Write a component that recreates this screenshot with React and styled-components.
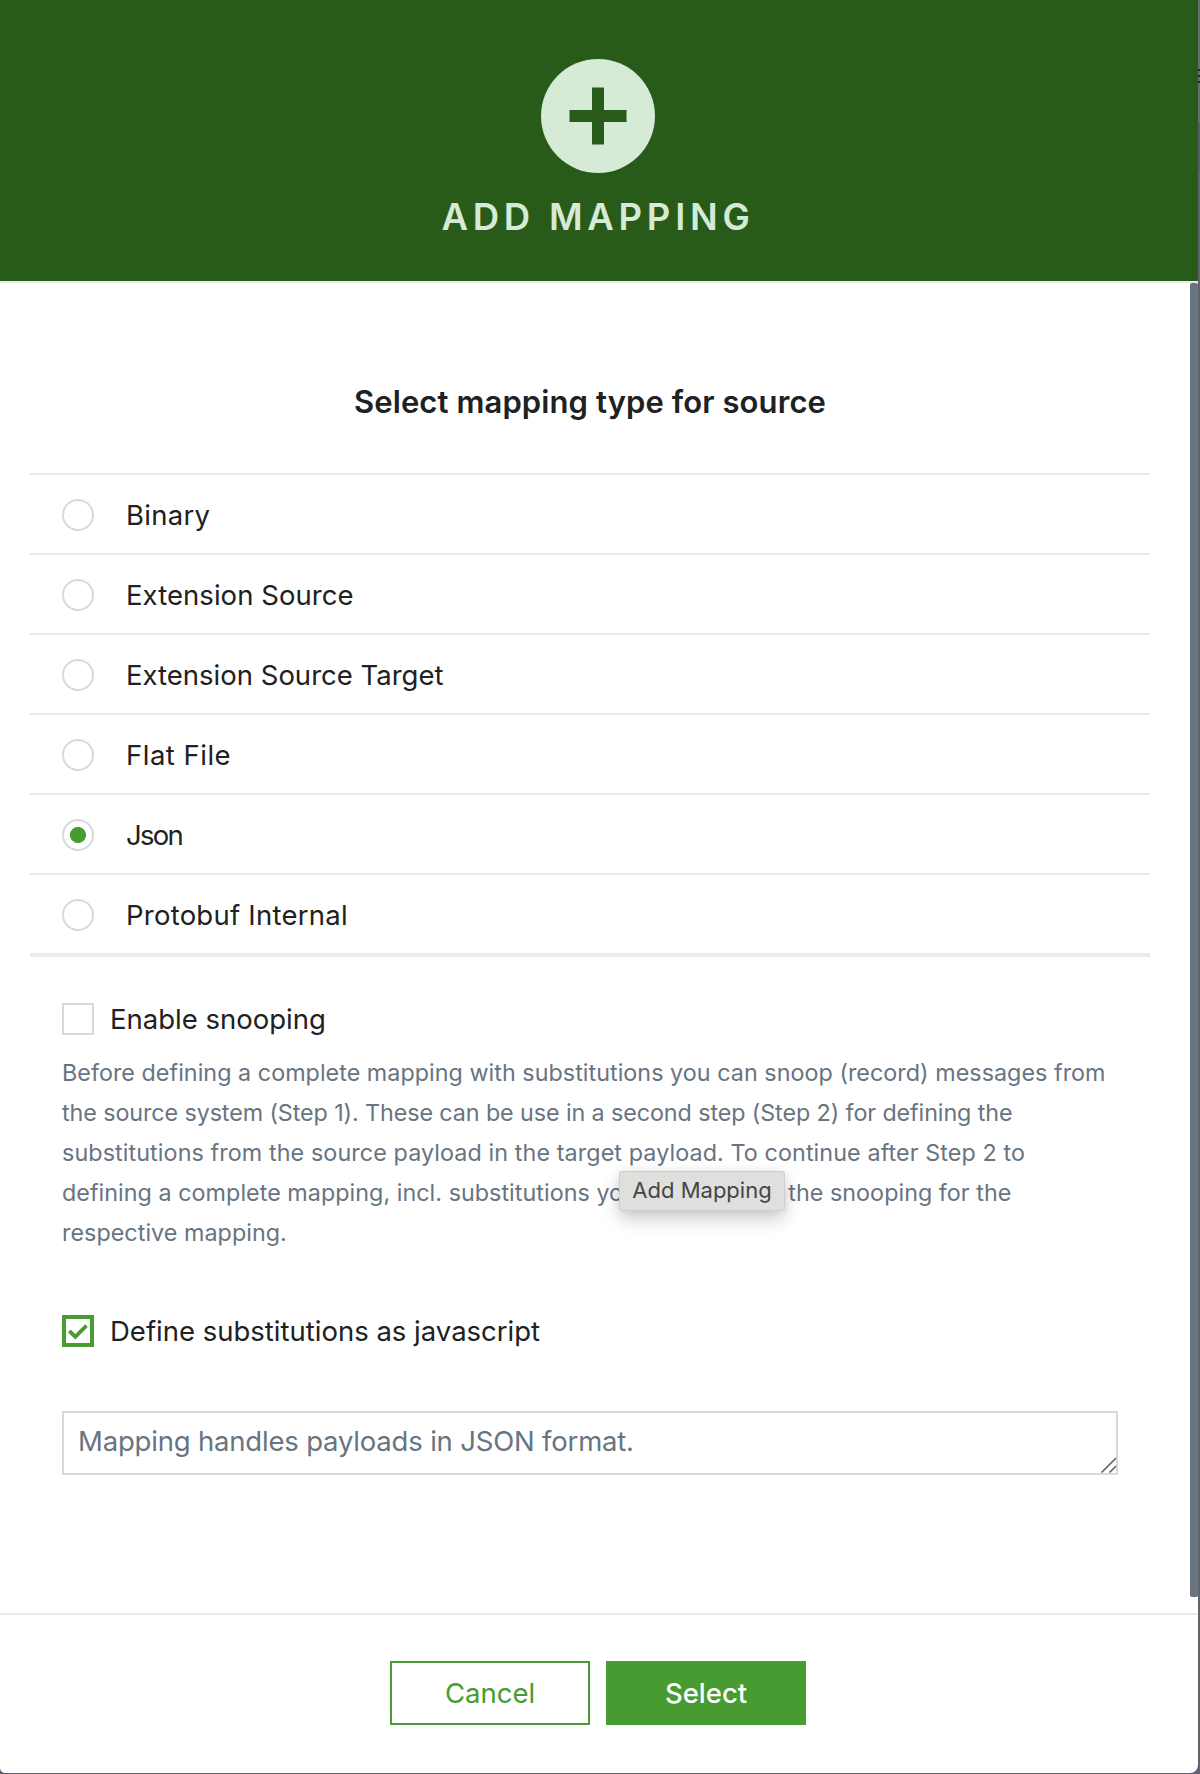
import React, { useState } from "react";
import styled, { createGlobalStyle } from "styled-components";

const GlobalStyle = createGlobalStyle`
  *, *::before, *::after { box-sizing: border-box; }
  html, body { margin: 0; padding: 0; }
  body {
    background: #5d616b;
    color: #202122;
    font-family: Inter, "Liberation Sans", sans-serif;
    font-size: 27.5px;
    overflow: hidden;
  }
`;

const Screen = styled.div`
  display: flex;
  width: 1200px;
  height: 1774px;
  background: linear-gradient(#6a6a70 0 122px, #585c67 122px 172px, #5f636d 172px 100%);
`;

const Dialog = styled.section`
  position: relative;
  display: flex;
  flex-direction: column;
  width: 1198px;
  height: 1773px;
  overflow: hidden;
  background: #fff;
  border-radius: 0 0 8px 5px;
`;

const Backdrop = styled.div`
  display: flex;
  flex-direction: column;
  gap: 4px;
  width: 2px;
  padding-top: 69px;
`;

const MenuDot = styled.i`
  height: 2px;
  background: #23262f;
`;

const Header = styled.header`
  display: flex;
  flex-direction: column;
  align-items: center;
  flex: none;
  height: 283px;
  padding: 59px 2px 0 0;
  color: #d5ebd5;
  background: #285b1a;
  border-bottom: 2px solid #e9e9ee;
`;

const PlusIcon = styled.svg`
  display: block;
  width: 114px;
  height: 114px;
`;

const HeaderTitle = styled.h1`
  margin: 19px 0 0;
  font-size: 36.5px;
  font-weight: 600;
  line-height: 50px;
  letter-spacing: 4.74px;
`;

const Body = styled.div`
  display: flex;
  flex: none;
  justify-content: space-between;
  height: 1330px;
`;

const Content = styled.div`
  width: 1120px;
  margin-left: 30px;
  padding-top: 94px;
`;

const ScrollThumb = styled.div`
  width: 8px;
  height: 1314px;
  border-radius: 2px;
  background: #68747f;
`;

const Title = styled.h2`
  margin: 0 0 46px;
  font-size: 31px;
  font-weight: 600;
  line-height: 50px;
  letter-spacing: 0.1px;
  text-align: center;
`;

const OptionList = styled.div`
  border-bottom: 2px solid #ebebeb;
`;

const Option = styled.label`
  display: flex;
  align-items: center;
  gap: 32px;
  height: 80px;
  padding: 2px 0 0 32px;
  border-top: 2px solid #ebebeb;
  &:last-child {
    height: 82px;
    border-bottom: 2px solid #ebebeb;
  }
`;

const Radio = styled.input`
  appearance: none;
  width: 32px;
  height: 32px;
  margin: 0;
  border: 2px solid #d5d9de;
  border-radius: 50%;
  background: #fff;
  &:checked {
    background: radial-gradient(circle, #489b31 7.6px, #fff 8.4px);
  }
`;

const Label = styled.span`
  line-height: 40px;
  white-space: nowrap;
  letter-spacing: ${(p) => p.$spacing || 0}px;
`;

const Form = styled.div`
  padding: 46px 32px 0;
`;

const CheckRow = styled.label`
  display: flex;
  align-items: center;
  gap: 16px;
  height: 32px;
`;

const CheckBox = styled.span`
  display: flex;
  align-items: center;
  justify-content: center;
  width: 32px;
  height: 32px;
  color: #489b31;
  border: ${(p) => (p.$checked ? "4px solid #489b31" : "2px solid #d5d9de")};
`;

const Help = styled.p`
  margin: 18px 0 62px;
  color: #68747f;
  font-size: 23.3px;
  line-height: 40px;
`;

const HelpLine = styled.span`
  display: block;
  white-space: nowrap;
  letter-spacing: ${(p) => p.$spacing}px;
`;

const NoteField = styled.div`
  display: flex;
  align-items: flex-end;
  justify-content: space-between;
  height: 64px;
  margin-top: 64px;
  padding-left: 14px;
  color: #68747f;
  border: 2px solid #d5d9de;
`;

const NoteText = styled.span`
  align-self: flex-start;
  line-height: 56px;
  letter-spacing: -0.19px;
`;

const Grip = styled.svg`
  display: block;
  width: 16px;
  height: 16px;
`;

const Footer = styled.footer`
  display: flex;
  flex: 1;
  align-items: flex-start;
  justify-content: center;
  gap: 16px;
  padding: 46px 2px 0 0;
  border-top: 2px solid #ebebeb;
`;

const Button = styled.button`
  width: 200px;
  height: 64px;
  padding: 0 0 1px;
  border: 2px solid #489b31;
  color: ${(p) => (p.$primary ? "#fff" : "#489b31")};
  background: ${(p) => (p.$primary ? "#489b31" : "#fff")};
  font: ${(p) => (p.$primary ? 500 : 400)} 27.5px Inter, sans-serif;
`;

const Tooltip = styled.div`
  position: absolute;
  left: 619px;
  top: 1171px;
  width: 166px;
  height: 40px;
  color: #454545;
  background: #dfdfdd;
  border: 1px solid #cecece;
  border-radius: 3px;
  box-shadow: 0 8px 18px rgba(0, 0, 0, 0.2), 0 0 8px rgba(0, 0, 0, 0.06);
  font-size: 22px;
  line-height: 37px;
  text-align: center;
`;

const OPTIONS = [
  { name: "Binary", spacing: 0.27 },
  { name: "Extension Source", spacing: 0.05 },
  { name: "Extension Source Target", spacing: 0 },
  { name: "Flat File", spacing: 0.5 },
  { name: "Json", spacing: -1.7 },
  { name: "Protobuf Internal", spacing: 0.24 },
];

const HELP = [
  ["Before defining a complete mapping with substitutions you can snoop (record) messages from", 0.043],
  ["the source system (Step 1). These can be use in a second step (Step 2) for defining the", -0.088],
  ["substitutions from the source payload in the target payload. To continue after Step 2 to", 0.102],
  ["defining a complete mapping, incl. substitutions you need to stop the snooping for the", 0.045],
  ["respective mapping.", 0.05],
];

export default function App() {
  const [selected, setSelected] = useState("Json");
  return (
    <Screen>
      <GlobalStyle />
      <Dialog>
        <Header>
          <PlusIcon viewBox="0 0 114 114">
            <circle cx="57" cy="57" r="57" fill="#d5ebd5" />
            <path d="M51 28.5h12V51h22.5v12H63v22.5H51V63H28.5V51H51z" fill="#285b1a" />
          </PlusIcon>
          <HeaderTitle>ADD MAPPING</HeaderTitle>
        </Header>
        <Body>
          <Content>
            <Title>Select mapping type for source</Title>
            <OptionList>
              {OPTIONS.map((o) => (
                <Option key={o.name}>
                  <Radio
                    type="radio"
                    name="type"
                    checked={selected === o.name}
                    onChange={() => setSelected(o.name)}
                  />
                  <Label $spacing={o.spacing}>{o.name}</Label>
                </Option>
              ))}
            </OptionList>
            <Form>
              <CheckRow>
                <CheckBox />
                <Label>Enable snooping</Label>
              </CheckRow>
              <Help>
                {HELP.map(([text, spacing]) => (
                  <HelpLine key={text} $spacing={spacing}>{text}</HelpLine>
                ))}
              </Help>
              <CheckRow>
                <CheckBox $checked>
                  <svg width="24" height="24" viewBox="0 0 24 24" fill="none">
                    <path d="M3.3 11.8l6 6L20.5 6.6" stroke="currentColor" strokeWidth="3.8" />
                  </svg>
                </CheckBox>
                <Label>Define substitutions as javascript</Label>
              </CheckRow>
              <NoteField>
                <NoteText>Mapping handles payloads in JSON format.</NoteText>
                <Grip viewBox="0 0 16 16" fill="none" stroke="#666" strokeWidth="1.6">
                  <path d="M1.5 15.5L16 1M9.5 15.5L16 9" />
                </Grip>
              </NoteField>
            </Form>
          </Content>
          <ScrollThumb />
        </Body>
        <Footer>
          <Button>Cancel</Button>
          <Button $primary>Select</Button>
        </Footer>
        <Tooltip>Add Mapping</Tooltip>
      </Dialog>
      <Backdrop>
        <MenuDot />
        <MenuDot />
        <MenuDot />
      </Backdrop>
    </Screen>
  );
}
